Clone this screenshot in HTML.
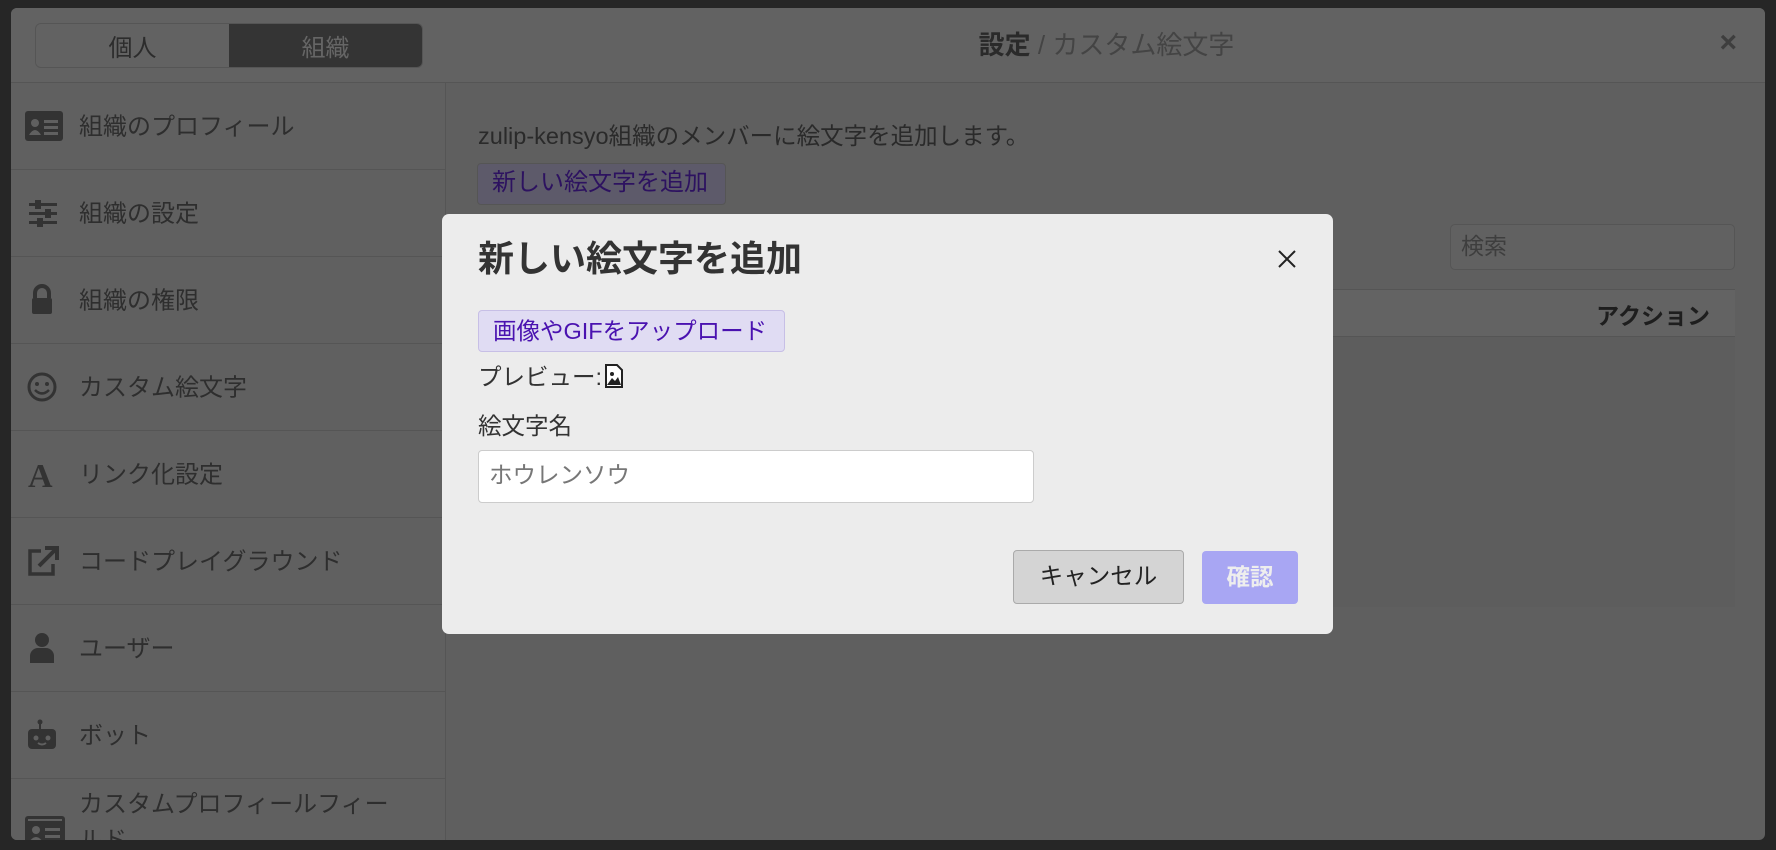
<!DOCTYPE html>
<html><head><meta charset="utf-8"><style>
*{box-sizing:border-box;margin:0;padding:0}
body{width:1776px;height:850px;background:#262626;font-family:"Liberation Sans","Noto Sans CJK JP",sans-serif;position:relative;overflow:hidden;color:#2a2a2a}
.panel{position:absolute;left:11px;top:8px;width:1754px;height:832px;background:#5f5f5f;border-radius:6px;overflow:hidden}
.hdr{position:absolute;left:0;top:0;width:100%;height:75px;background:#626262;border-bottom:1px solid #555}
.tabs{position:absolute;left:24px;top:15px;width:388px;height:45px;border:1px solid #555;border-radius:6px;overflow:hidden;display:flex}
.tabs div{flex:1;display:flex;align-items:center;justify-content:center;font-size:24px}
.tabs .a{background:#626262;color:#2c2c2c}
.tabs .b{background:#343434;color:#666}
.title{position:absolute;left:0;right:0;top:21px;line-height:32px;text-align:center;font-size:26px;color:#444;padding-left:437px}
.title b{color:#2a2a2a}
.x{position:absolute;right:28px;top:18px;font-size:30px;color:#3e3e3e;font-weight:bold}
.side{position:absolute;left:0;top:75px;width:435px;height:760px;border-right:1px solid #555;background:#606060}
.it{height:87px;border-bottom:1px solid #555;position:relative;font-size:24px;color:#2e2e2e}
.it span{position:absolute;left:68px;top:calc(50% - 2px);transform:translateY(-50%);white-space:nowrap}
.it svg{position:absolute;left:14px;top:50%;transform:translateY(-50%)}
.msg{position:absolute;left:467px;top:113px;font-size:23.5px;line-height:30px;color:#2a2a2a}
.btn1{position:absolute;left:466px;top:155px;width:249px;height:42px;background:#5d5a6a;border:1px solid #555;border-radius:4px;color:#2d1260;font-size:24px;line-height:38px;padding:0 14px;white-space:nowrap}
.srch{position:absolute;left:1439px;top:216px;width:285px;height:46px;border:1px solid #555;border-radius:5px;background:#616161;color:#3e3e3e;font-size:23px;line-height:42px;padding:0 10px}
.th{position:absolute;left:435px;top:281px;width:1289px;height:48px;background:#636363;border-top:1px solid #555;border-bottom:1px solid #555}
.th span{position:absolute;right:25px;top:7px;font-weight:bold;font-size:23px;color:#1e1e1e}
.tb{position:absolute;left:435px;top:329px;width:1289px;height:270px;background:#5d5d5d}
.modal{position:absolute;left:442px;top:214px;width:891px;height:420px;background:#ececec;border-radius:7px}
.mt{position:absolute;left:36px;top:22px;font-size:36px;line-height:46px;font-weight:bold;color:#333;white-space:nowrap}
.mx{position:absolute;left:835px;top:35px}
.up{position:absolute;left:36px;top:96px;width:307px;height:42px;background:#e0dcf3;border:1px solid #c7bfe6;border-radius:4px;color:#4a12b0;font-size:23.5px;line-height:40px;padding:0 14px;white-space:nowrap}
.pv{position:absolute;left:36px;top:147px;font-size:23.5px;line-height:32px;color:#333}
.ln{position:absolute;left:36px;top:196px;font-size:23.5px;line-height:32px;color:#333}
.inp{position:absolute;left:36px;top:236px;width:556px;height:53px;background:#fff;border:1px solid #ccc;border-radius:4px;font-size:23.5px;color:#777;line-height:49px;padding:0 10px}
.cn{position:absolute;left:571px;top:336px;width:171px;height:54px;background:#d4d4d4;border:1px solid #aaa;border-radius:4px;font-size:23.5px;color:#222;text-align:center;line-height:50px}
.ok{position:absolute;left:760px;top:337px;width:96px;height:53px;background:#a8a6f3;border-radius:4px;font-size:23.5px;color:#eee;text-align:center;line-height:52px;font-weight:bold}
</style></head><body>
<div class="panel">
 <div class="hdr">
  <div class="tabs"><div class="a">個人</div><div class="b">組織</div></div>
  <div class="title"><b>設定</b> / カスタム絵文字</div>
  <div class="x">×</div>
 </div>
 <div class="side">
  <div class="it"><svg width="38" height="30" viewBox="0 0 38 30"><rect x="0" y="0" width="38" height="30" rx="3" fill="#333"/><circle cx="10" cy="12" r="4" fill="#606060"/><path d="M4 24 Q10 14 16 24Z" fill="#606060"/><rect x="19" y="9" width="14" height="3" fill="#606060"/><rect x="19" y="15" width="14" height="3" fill="#606060"/><rect x="19" y="21" width="14" height="3" fill="#606060"/></svg><span>組織のプロフィール</span></div>
  <div class="it"><svg width="34" height="30" viewBox="0 0 34 30"><g fill="#333"><rect x="4" y="5" width="28" height="3"/><rect x="4" y="14" width="28" height="3"/><rect x="4" y="23" width="28" height="3"/><rect x="10" y="2" width="6" height="9"/><rect x="20" y="11" width="6" height="9"/><rect x="12" y="20" width="6" height="9"/></g></svg><span>組織の設定</span></div>
  <div class="it"><svg width="34" height="34" viewBox="0 0 34 34"><path d="M10 15 V10 a7 7 0 0 1 14 0 V15" stroke="#333" stroke-width="4" fill="none"/><rect x="7" y="15" width="20" height="16" rx="2" fill="#333"/></svg><span>組織の権限</span></div>
  <div class="it"><svg width="34" height="34" viewBox="0 0 34 34"><circle cx="17" cy="17" r="13" stroke="#333" stroke-width="3" fill="none"/><circle cx="12" cy="14" r="2" fill="#333"/><circle cx="22" cy="14" r="2" fill="#333"/><path d="M10 20 Q17 27 24 20" stroke="#333" stroke-width="2.5" fill="none"/></svg><span>カスタム絵文字</span></div>
  <div class="it"><svg width="34" height="34" viewBox="0 0 34 34"><text x="3" y="30" font-family="Liberation Serif" font-weight="bold" font-size="34" fill="#333">A</text></svg><span>リンク化設定</span></div>
  <div class="it"><svg width="36" height="34" viewBox="0 0 36 34"><path d="M16 7 H5 V30 H28 V20" stroke="#333" stroke-width="3.5" fill="none"/><path d="M14 22 L30 6 M20 4 H32 V16" stroke="#333" stroke-width="4" fill="none"/></svg><span>コードプレイグラウンド</span></div>
  <div class="it"><svg width="34" height="34" viewBox="0 0 34 34"><circle cx="17" cy="9" r="7" fill="#333"/><path d="M5 32 V25 a8 8 0 0 1 8 -8 H21 a8 8 0 0 1 8 8 V32Z" fill="#333"/></svg><span>ユーザー</span></div>
  <div class="it"><svg width="34" height="34" viewBox="0 0 34 34"><circle cx="15" cy="4" r="2.5" fill="#333"/><rect x="14" y="5" width="2" height="6" fill="#333"/><rect x="3" y="11" width="28" height="20" rx="4" fill="#333"/><circle cx="11" cy="20" r="2.5" fill="#606060"/><circle cx="23" cy="20" r="2.5" fill="#606060"/><path d="M13 25 Q17 28 21 25" stroke="#606060" stroke-width="2" fill="none"/></svg><span>ボット</span></div>
  <div class="it" style="border:none"><svg width="40" height="30" viewBox="0 0 40 30" style="top:60%"><rect width="40" height="30" rx="3" fill="#333"/><rect x="3" y="3" width="34" height="2" fill="#606060"/><circle cx="11" cy="14" r="4" fill="#606060"/><path d="M4 26 Q11 16 18 26Z" fill="#606060"/><rect x="20" y="12" width="15" height="3" fill="#606060"/><rect x="20" y="19" width="15" height="3" fill="#606060"/></svg><span style="top:8px;transform:none;line-height:36px">カスタムプロフィールフィー<br>ルド</span></div>
 </div>
 <div class="msg">zulip-kensyo組織のメンバーに絵文字を追加します。</div>
 <div class="btn1">新しい絵文字を追加</div>
 <div class="srch">検索</div>
 <div class="th"><span>アクション</span></div>
 <div class="tb"></div>
</div>
<div class="modal">
 <div class="mt">新しい絵文字を追加</div>
 <svg class="mx" width="20" height="20" viewBox="0 0 20 20"><path d="M2 2 L18 18 M18 2 L2 18" stroke="#222" stroke-width="2"/></svg>
 <div class="up">画像やGIFをアップロード</div>
 <div class="pv">プレビュー:<svg width="20" height="24" viewBox="0 0 20 24" style="vertical-align:-3px;margin-left:2px"><path d="M2 1 H13 L18 6 V23 H2Z" stroke="#222" stroke-width="2" fill="#fff"/><circle cx="8" cy="10" r="2" fill="#222"/><path d="M3 21 L8 14 L11 17 L14 13 L17 21Z" fill="#222"/></svg></div>
 <div class="ln">絵文字名</div>
 <div class="inp">ホウレンソウ</div>
 <div class="cn">キャンセル</div>
 <div class="ok">確認</div>
</div>
</body></html>
